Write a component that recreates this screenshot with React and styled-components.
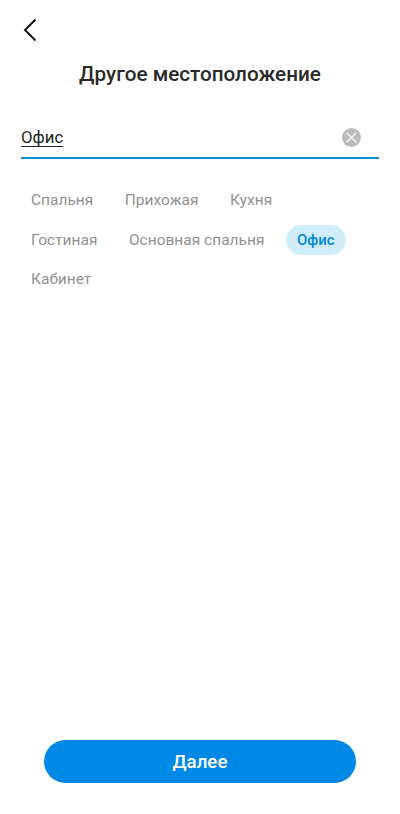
import styled, { createGlobalStyle } from "styled-components"

const locations = [
    { name: "Спальня" },
    { name: "Прихожая" },
    { name: "Кухня" },
    { name: "Гостиная" },
    { name: "Основная спальня" },
    { name: "Офис", selected: true },
    { name: "Кабинет" },
]

export default function App() {
    return (
        <>
            <GlobalStyle />
            <Page>
                <BackButton aria-label="Назад">
                    <svg width="14" height="24" viewBox="0 0 14 24" fill="none">
                        <path d="M12.5 1.5L2 12l10.5 10.5" stroke="#111" strokeWidth="2" />
                    </svg>
                </BackButton>
                <Title>Другое местоположение</Title>
                <Field>
                    <FieldValue>Офис</FieldValue>
                    <ClearButton aria-label="Очистить">
                        <svg width="19" height="19" viewBox="0 0 19 19">
                            <circle cx="9.5" cy="9.5" r="9.5" fill="#bdbdbd" />
                            <path d="M4.7 4.7l9.6 9.6M14.3 4.7l-9.6 9.6" stroke="#f4f4f4" strokeWidth="1.5" />
                        </svg>
                    </ClearButton>
                </Field>
                <Chips>
                    {locations.map((item) => (
                        <Chip key={item.name} $selected={item.selected}>{item.name}</Chip>
                    ))}
                </Chips>
                <Footer>
                    <NextButton>Далее</NextButton>
                </Footer>
            </Page>
        </>
    )
}

const GlobalStyle = createGlobalStyle`
html, body {
    margin: 0;
    padding: 0;
    background: #ffffff;
}
* {
    box-sizing: border-box;
}
`

const Page = styled.div`
width: 400px;
height: 814px;
display: flex;
flex-direction: column;
padding: 18px 21px 31px 21px;
font-family: Roboto, sans-serif;
background: #ffffff;
`

const BackButton = styled.button`
width: 14px;
height: 24px;
padding: 0;
margin-left: 2px;
border: none;
background: none;
display: block;
`

const Title = styled.h1`
margin: 20px 0 0 0;
font-size: 20.7px;
line-height: 24px;
font-weight: 500;
color: #2a2a2a;
text-align: center;
`

const Field = styled.div`
height: 42px;
margin-top: 31px;
display: flex;
align-items: center;
justify-content: space-between;
padding-right: 18px;
border-bottom: 2px solid #0a8fd8;
`

const FieldValue = styled.span`
font-size: 16.8px;
color: #222222;
text-decoration: underline;
text-underline-offset: 3px;
text-decoration-thickness: 1px;
`

const ClearButton = styled.button`
width: 19px;
height: 19px;
padding: 0;
border: none;
background: none;
display: block;
`

const Chips = styled.div`
margin-top: 26px;
display: flex;
flex-wrap: wrap;
column-gap: 11.5px;
row-gap: 9.5px;
`

const Chip = styled.div`
height: 30px;
padding: 0 ${(props) => (props.$selected ? "11px" : "10px")};
border-radius: 15px;
display: flex;
align-items: center;
font-size: ${(props) => (props.$selected ? "15px" : "15.5px")};
font-weight: ${(props) => (props.$selected ? 500 : 400)};
color: ${(props) => (props.$selected ? "#0088e0" : "#919191")};
background: ${(props) => (props.$selected ? "#d0ecfb" : "transparent")};
`

const Footer = styled.div`
margin-top: auto;
display: flex;
justify-content: center;
`

const NextButton = styled.button`
width: 312px;
height: 43px;
border: none;
border-radius: 22px;
background: #0088e6;
color: #ffffff;
font-family: Roboto, sans-serif;
font-size: 18.7px;
font-weight: 500;
`
